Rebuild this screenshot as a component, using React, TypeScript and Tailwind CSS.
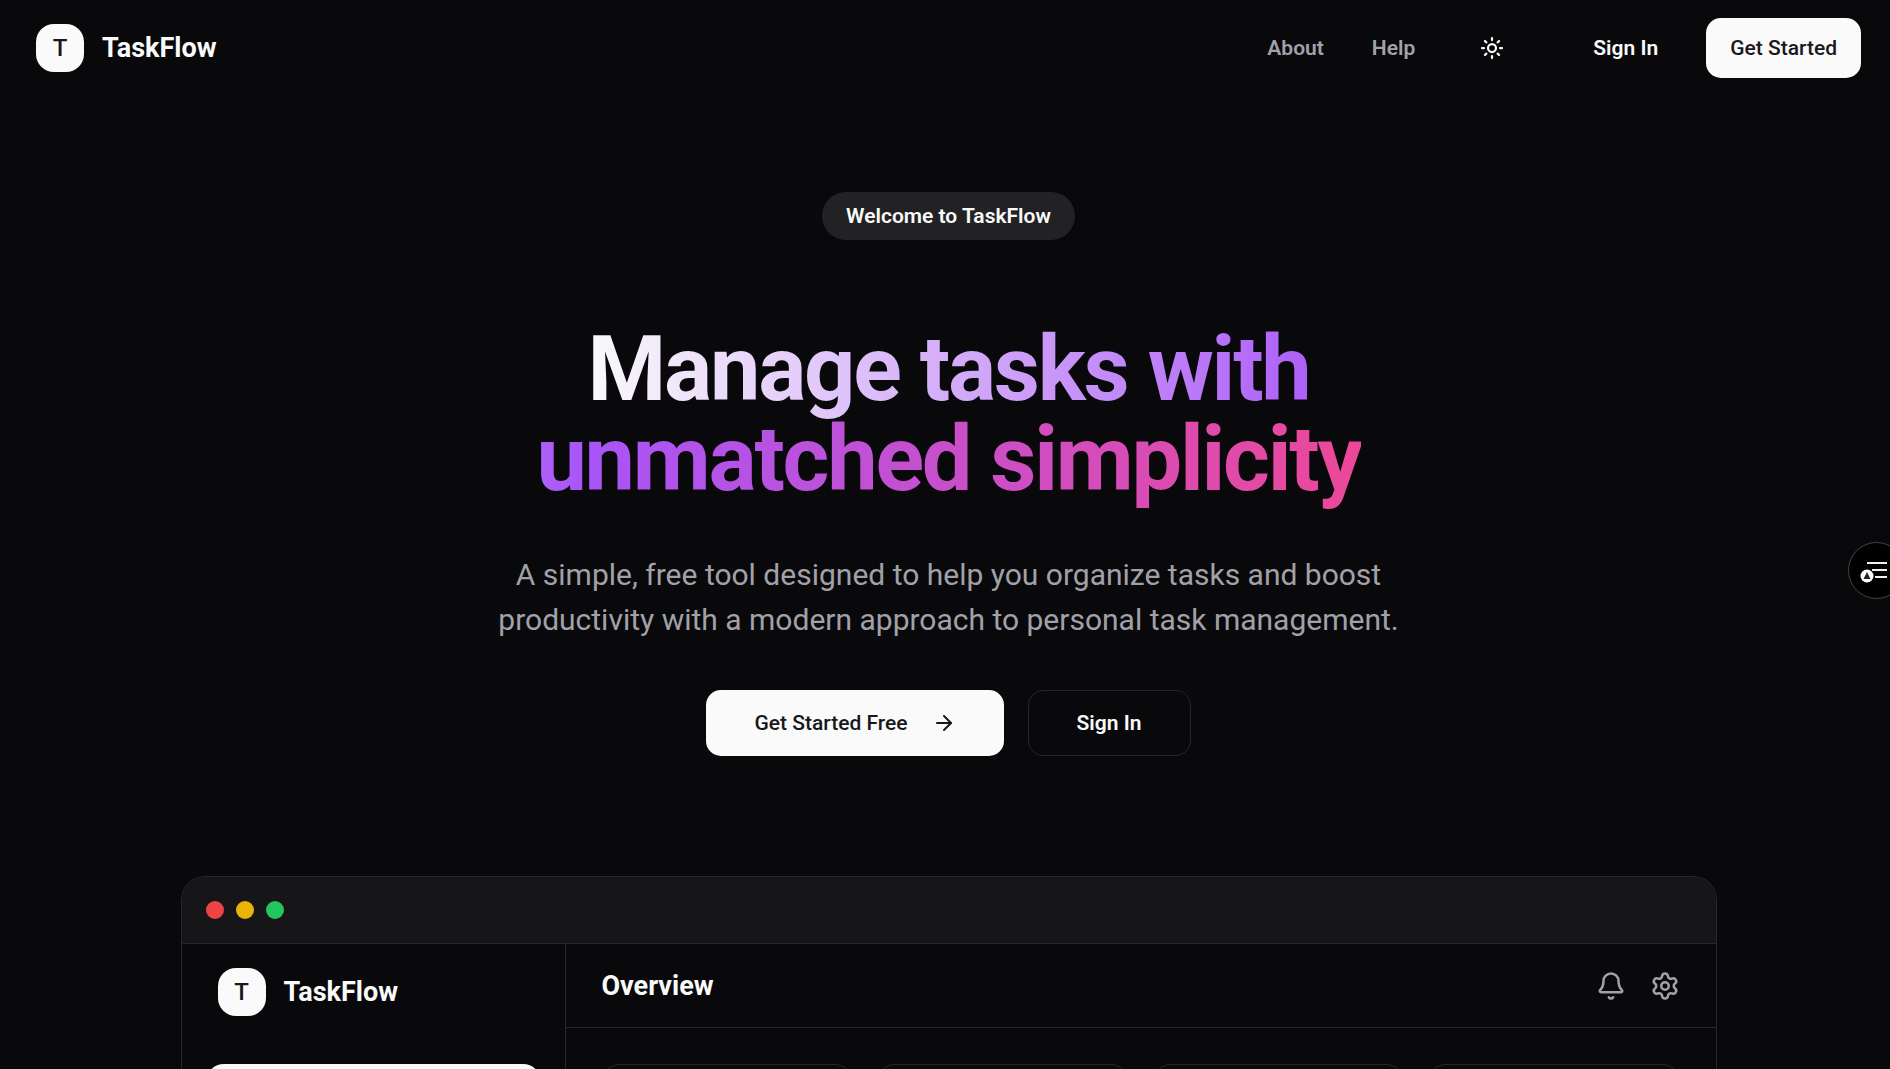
import { ArrowRight, Bell, Settings, Sun } from "lucide-react";

function Brand() {
  return (
    <a href="#" className="flex items-center gap-[18px]">
      <span className="flex size-12 items-center justify-center rounded-[18px] bg-[#fafafa] text-[24px] leading-none font-medium text-[#18181b]">
        T
      </span>
      <span className="text-[27px] leading-9 font-bold">TaskFlow</span>
    </a>
  );
}

const cards = ["Total", "Active", "Done", "Overdue"];

function Preview() {
  return (
    <section className="mx-auto mt-[120px] w-full max-w-[1536px] overflow-hidden rounded-t-3xl border border-b-0 border-[#27272a] bg-[#09090b]">
      <div className="flex gap-3 border-b border-[#27272a] bg-[#161618] p-6">
        <span className="size-[18px] rounded-full bg-[#ef4444]" />
        <span className="size-[18px] rounded-full bg-[#eab308]" />
        <span className="size-[18px] rounded-full bg-[#22c55e]" />
      </div>
      <div className="flex h-[600px]">
        <aside className="w-96 shrink-0 border-r border-[#27272a] p-6">
          <div className="px-3">
            <Brand />
          </div>
          <div className="mt-12 h-[60px] rounded-[18px] bg-[#fafafa]" />
        </aside>
        <div className="min-w-0 flex-1">
          <header className="flex h-[84px] items-center justify-between border-b border-[#27272a] px-9">
            <h2 className="text-[27px] leading-9 font-bold">Overview</h2>
            <div className="flex gap-6 text-[#a1a1aa]">
              <button aria-label="Notifications">
                <Bell size={30} />
              </button>
              <button aria-label="Settings">
                <Settings size={30} />
              </button>
            </div>
          </header>
          <div className="grid grid-cols-4 gap-6 p-9">
            {cards.map((card) => (
              <div key={card} className="h-48 rounded-[18px] border border-[#27272a]" />
            ))}
          </div>
        </div>
      </div>
    </section>
  );
}

export default function App() {
  return (
    <div className="h-screen overflow-hidden bg-[#09090b] font-['Roboto',sans-serif] text-[#fafafa]">
      <header className="flex h-24 items-center justify-between pr-[29px] pl-9">
        <Brand />
        <nav className="flex items-center gap-12 text-[21px] leading-[30px] font-medium">
          <a href="#" className="font-semibold text-[#a1a1aa]">About</a>
          <a href="#" className="font-semibold text-[#a1a1aa]">Help</a>
          <button aria-label="Toggle theme" className="flex h-[60px] w-[58px] items-center justify-center">
            <Sun size={24} strokeWidth={2.25} />
          </button>
          <div className="flex gap-6">
            <button className="h-[60px] px-6 font-semibold">Sign In</button>
            <button className="h-[60px] rounded-[15px] bg-[#fafafa] px-6 text-[#18181b]">Get Started</button>
          </div>
        </nav>
      </header>
      <main className="flex flex-col items-center pt-24 pl-[7px] text-center">
        <span className="rounded-full bg-[#222224] px-6 py-[9px] text-[21px] leading-[30px] font-semibold">
          Welcome to TaskFlow
        </span>
        <h1 className="mt-[85px] max-w-[1000px] text-[90px] leading-none font-bold tracking-tight">
          <span className="bg-[linear-gradient(to_right,#fafafa,#a855f7,#ec4899)] bg-clip-text text-transparent">
            Manage tasks with unmatched simplicity
          </span>
        </h1>
        <p className="mt-[47px] max-w-[960px] text-[30px] leading-[45px] text-[#a1a1aa]">
          A simple, free tool designed to help you organize tasks and boost productivity with a modern approach to
          personal task management.
        </p>
        <div className="mt-12 flex gap-6 text-[21px] leading-[30px]">
          <button className="flex h-[66px] items-center gap-6 rounded-[15px] bg-[#fafafa] px-12 font-medium text-[#18181b]">
            Get Started Free
            <ArrowRight size={24} />
          </button>
          <button className="h-[66px] rounded-[15px] border border-[#27272a] px-12 font-semibold">Sign In</button>
        </div>
        <Preview />
      </main>
      <button
        aria-label="Open reader panel"
        className="fixed top-[542px] -right-[15px] size-[57px] rounded-full border border-[#444446] bg-black"
      >
        <svg viewBox="0 0 55 55" className="size-full" fill="none">
          <path d="M18 20h20M23 27h15M26 34h12" stroke="#f1f1f1" strokeWidth="2" />
          <circle cx="18" cy="33" r="6.5" fill="#fff" />
          <path d="M18 29l3.5 7h-7z" fill="#222" />
        </svg>
      </button>
    </div>
  );
}
